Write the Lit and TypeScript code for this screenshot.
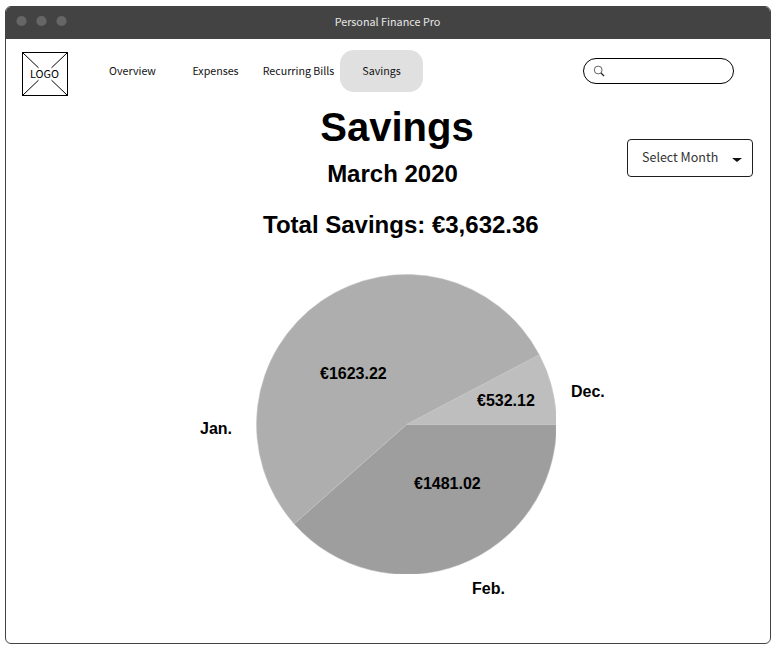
import { LitElement, html, svg, css } from "lit";
import { customElement, state } from "lit/decorators.js";
import { classMap } from "lit/directives/class-map.js";

const NAV = ["Overview", "Expenses", "Recurring Bills", "Savings"];

interface Slice {
  month: string;
  amount: string;
  color: string;
  from: number;
  to: number;
  amountAt: [number, number];
  monthAt: [number, number];
}

// Angles in degrees, clockwise from three o'clock.
const SLICES: Slice[] = [
  { month: "Feb.", amount: "€1481.02", color: "#9e9e9e", from: 0, to: 138.5, amountAt: [158, 215], monthAt: [216, 320] },
  { month: "Jan.", amount: "€1623.22", color: "#aeaeae", from: 138.5, to: 332.3, amountAt: [64, 105], monthAt: [-56, 160] },
  { month: "Dec.", amount: "€532.12", color: "#bebebe", from: 332.3, to: 360, amountAt: [221, 132], monthAt: [315, 123] },
];

@customElement("savings-chart")
export class SavingsChart extends LitElement {
  static styles = css`
    :host { display: block; width: 300px; height: 300px; }
    svg { display: block; overflow: visible; }
    .edge { stroke: #c4c4c4; stroke-width: 0.5; }
    text { font: bold 16px "Liberation Sans", Arial, sans-serif; fill: #000; }
  `;

  private path(s: Slice) {
    const c = 150.5;
    const r = 150;
    const pt = (deg: number) => {
      const a = (deg * Math.PI) / 180;
      return `${(c + r * Math.cos(a)).toFixed(2)} ${(c + r * Math.sin(a)).toFixed(2)}`;
    };
    return `M${c} ${c}L${pt(s.from)}A${r} ${r} 0 ${s.to - s.from > 180 ? 1 : 0} 1 ${pt(s.to)}Z`;
  }

  render() {
    return html`<svg width="300" height="300" viewBox="0 0 300 300">
      <defs><clipPath id="frame"><rect width="300" height="300"></rect></clipPath></defs>
      <g clip-path="url(#frame)">
        ${SLICES.map((s) => svg`<path class="edge" fill=${s.color} d=${this.path(s)}></path>`)}
      </g>
      ${SLICES.map(
        (s) => svg`<text x=${s.amountAt[0]} y=${s.amountAt[1]}>${s.amount}</text>
          <text x=${s.monthAt[0]} y=${s.monthAt[1]}>${s.month}</text>`
      )}
    </svg>`;
  }
}

@customElement("app-root")
export class AppRoot extends LitElement {
  @state() private active = "Savings";

  static styles = css`
    :host {
      display: block;
      box-sizing: border-box;
      height: 651px;
      padding: 6px 0 0 5px;
      background: #fff;
      color: #000;
      font-family: "Noto Sans CJK SC", "Noto Sans", sans-serif;
      overflow: hidden;
    }
    .window {
      box-sizing: border-box;
      width: 766px;
      height: 638px;
      border: 1px solid #434343;
      border-radius: 6px;
      overflow: hidden;
    }
    .titlebar {
      display: grid;
      grid-template-columns: 1fr auto 1fr;
      align-items: center;
      height: 32px;
      padding: 0 11px 0 10px;
      background: #434343;
      color: #e6e6e6;
      font-size: 10.8px;
      line-height: 16px;
    }
    .title { padding-bottom: 4px; }
    .dots { display: block; margin-bottom: 4px; }
    .header { display: flex; align-items: flex-start; height: 61px; padding: 11px 36px 0 16px; box-sizing: border-box; }
    .logo { display: block; margin-top: 2px; }
    .logo text { font-size: 10.8px; }
    .nav { display: flex; margin-left: 23px; }
    .item {
      width: 83px;
      height: 42px;
      border: 0;
      padding: 0 0 1px;
      border-radius: 14px;
      background: none;
      color: #111;
      font: 10.7px/41px "Noto Sans CJK SC", "Noto Sans", sans-serif;
      text-align: center;
      white-space: nowrap;
    }
    .item.active { background: #e0e0e0; }
    .search {
      display: flex;
      align-items: center;
      box-sizing: border-box;
      width: 151px;
      height: 26px;
      margin: 8px 0 0 auto;
      padding-left: 9px;
      border: 1px solid #000;
      border-radius: 13px;
    }
    .body { display: grid; grid-template-columns: 621px 126px; }
    .main { display: flex; flex-direction: column; padding-left: 250px; }
    h1, h2 { margin: 0; font-family: "Liberation Sans", Arial, sans-serif; font-weight: bold; white-space: nowrap; }
    h1 { width: 282px; text-align: center; font-size: 40px; line-height: 46px; margin-top: 4px; }
    h2 { font-size: 24px; line-height: 28px; }
    .month { width: 273px; text-align: center; margin-top: 10px; }
    .total { margin: 23px 0 0 7px; }
    .chart { margin-top: 35px; }
    .select {
      display: flex;
      align-items: center;
      justify-content: space-between;
      box-sizing: border-box;
      width: 126px;
      height: 38px;
      margin-top: 39px;
      padding: 0 10px 0 14px;
      border: 1px solid #1f1f1f;
      border-radius: 4px;
      color: #333;
      font-size: 12.5px;
      line-height: 34px;
    }
    .select span { padding-bottom: 2px; }
    .caret { display: block; margin-top: 4px; }
  `;

  render() {
    return html`
      <div class="window">
        <div class="titlebar">
          <svg class="dots" width="52" height="12" viewBox="0 0 52 12" fill="#666">
            <circle cx="5.5" cy="6" r="5.1"></circle>
            <circle cx="25.5" cy="6" r="5.1"></circle>
            <circle cx="45.5" cy="6" r="5.1"></circle>
          </svg>
          <div class="title">Personal Finance Pro</div>
        </div>
        <div class="header">
          <svg class="logo" width="46" height="44" viewBox="0 0 46 44">
            <rect x="0.5" y="0.5" width="45" height="43" fill="#fff" stroke="#000"></rect>
            <path d="M1 1L16.5 15.8M45 1L29.5 15.8M1 43L16.5 28.2M45 43L29.5 28.2" stroke="#000" fill="none"></path>
            <text x="22.5" y="26" text-anchor="middle">LOGO</text>
          </svg>
          <nav class="nav">
            ${NAV.map(
              (n) => html`<button
                class=${classMap({ item: true, active: n === this.active })}
                @click=${() => (this.active = n)}
              >${n}</button>`
            )}
          </nav>
          <div class="search">
            <svg width="12" height="12" viewBox="0 0 12 12" fill="none" stroke="#222">
              <circle cx="5.2" cy="5" r="3.9" stroke-width="0.7"></circle>
              <path d="M8 8L11 11" stroke-width="1.3"></path>
            </svg>
          </div>
        </div>
        <div class="body">
          <div class="main">
            <h1>Savings</h1>
            <h2 class="month">March 2020</h2>
            <h2 class="total">Total Savings: €3,632.36</h2>
            <savings-chart class="chart"></savings-chart>
          </div>
          <div class="select">
            <span>Select Month</span>
            <svg class="caret" width="10" height="4" viewBox="0 0 10 4"><path d="M0 0H10L5 4Z" fill="#111"></path></svg>
          </div>
        </div>
      </div>
    `;
  }
}
